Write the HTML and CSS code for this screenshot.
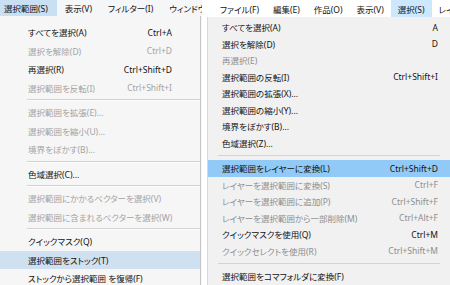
FILE: index.html
```html
<!DOCTYPE html>
<html lang="ja">
<head>
    <meta charset="UTF-8">
    <meta name="viewport" content="width=device-width, initial-scale=1.0">
    <title>選択範囲メニュー</title>
    <link rel="stylesheet" href="styles.css">
</head>
<body>
    <div class="panel panel-left">
        <div class="menubar">
            <span class="menu-title open">選択範囲(S)</span>
            <span class="menu-title">表示(V)</span>
            <span class="menu-title">フィルター(I)</span>
            <span class="menu-title">ウィンドウ(W)</span>
        </div>
        <div class="dropdown">
            <div class="item"><span>すべてを選択(A)</span><span class="key">Ctrl+A</span></div>
            <div class="item disabled"><span>選択を解除(D)</span><span class="key">Ctrl+D</span></div>
            <div class="item"><span>再選択(R)</span><span class="key">Ctrl+Shift+D</span></div>
            <div class="item disabled"><span>選択範囲を反転(I)</span><span class="key">Ctrl+Shift+I</span></div>
            <div class="sep"></div>
            <div class="item disabled"><span>選択範囲を拡張(E)...</span></div>
            <div class="item disabled"><span>選択範囲を縮小(U)...</span></div>
            <div class="item disabled"><span>境界をぼかす(B)...</span></div>
            <div class="sep"></div>
            <div class="item"><span>色域選択(C)...</span></div>
            <div class="sep"></div>
            <div class="item disabled"><span>選択範囲にかかるベクターを選択(V)</span></div>
            <div class="item disabled"><span>選択範囲に含まれるベクターを選択(W)</span></div>
            <div class="sep"></div>
            <div class="item"><span>クイックマスク(Q)</span></div>
            <div class="item active"><span>選択範囲をストック(T)</span></div>
            <div class="item"><span>ストックから選択範囲 を復帰(F)</span></div>
        </div>
    </div>

    <div class="gap"></div>

    <div class="panel panel-right">
        <div class="menubar">
            <span class="app-icon"></span>
            <span class="menu-title">ファイル(F)</span>
            <span class="menu-title">編集(E)</span>
            <span class="menu-title">作品(O)</span>
            <span class="menu-title">表示(V)</span>
            <span class="menu-title open">選択(S)</span>
            <span class="menu-title">レイヤー(L)</span>
        </div>
        <div class="dropdown">
            <div class="item"><span>すべてを選択(A)</span><span class="key">A</span></div>
            <div class="item"><span>選択を解除(D)</span><span class="key">D</span></div>
            <div class="item disabled"><span>再選択(E)</span></div>
            <div class="item"><span>選択範囲の反転(I)</span><span class="key">Ctrl+Shift+I</span></div>
            <div class="item"><span>選択範囲の拡張(X)...</span></div>
            <div class="item"><span>選択範囲の縮小(Y)...</span></div>
            <div class="item"><span>境界をぼかす(B)...</span></div>
            <div class="item"><span>色域選択(Z)...</span></div>
            <div class="sep"></div>
            <div class="item active"><span>選択範囲をレイヤーに変換(L)</span><span class="key">Ctrl+Shift+D</span></div>
            <div class="item disabled"><span>レイヤーを選択範囲に変換(S)</span><span class="key">Ctrl+F</span></div>
            <div class="item disabled"><span>レイヤーを選択範囲に追加(P)</span><span class="key">Ctrl+Shift+F</span></div>
            <div class="item disabled"><span>レイヤーを選択範囲から一部削除(M)</span><span class="key">Ctrl+Alt+F</span></div>
            <div class="item"><span>クイックマスクを使用(Q)</span><span class="key">Ctrl+M</span></div>
            <div class="item disabled"><span>クイックセレクトを使用(R)</span><span class="key">Ctrl+Shift+M</span></div>
            <div class="sep"></div>
            <div class="item"><span>選択範囲をコマフォルダに変換(F)</span></div>
        </div>
    </div>
</body>
</html>
```

FILE: styles.css
```css
body {
    margin: 0;
    width: 450px;
    height: 285px;
    overflow: hidden;
    display: flex;
    background-color: #ffffff;
    font-family: "Noto Sans", "Noto Sans CJK JP", sans-serif;
    font-size: 8.5px;
    font-feature-settings: "palt";
    color: #111111;
}
.panel {
    display: flex;
    flex-direction: column;
    overflow: hidden;
}
.gap {
    width: 5px;
    flex-shrink: 0;
    background-color: #ffffff;
}
.menubar {
    display: flex;
    align-items: center;
    white-space: nowrap;
    flex-shrink: 0;
    overflow: hidden;
}
.menu-title {
    display: flex;
    align-items: center;
    height: 100%;
    padding: 0 7px;
}
.dropdown {
    flex: 1;
}
.item {
    display: flex;
    justify-content: space-between;
    align-items: center;
    white-space: nowrap;
}
.item.disabled {
    color: #a3a3a3;
}
.sep {
    display: flex;
    align-items: center;
}
.sep::before {
    content: "";
    flex: 1;
}

/* left: older style menu */
.panel-left {
    width: 202px;
    flex-shrink: 0;
    background-color: #f4f6f8;
}
.panel-left .menubar {
    height: 16px;
}
.panel-left .menu-title {
    padding: 0 8px;
}
.panel-left .menu-title.open {
    padding: 0 9px 0 4px;
    background-color: #c9dff3;
}
.panel-left .dropdown {
    width: 200px;
    padding-top: 7px;
    background-color: #f6f6f6;
    border-right: 1px solid #c6c6c6;
}
.panel-left .item {
    height: 18.5px;
    padding: 0 28px 0 28px;
}
.panel-left .item.active {
    background-color: #cfe1f1;
}
.panel-left .sep {
    height: 6px;
    padding-left: 27px;
}
.panel-left .sep::before {
    border-top: 1px solid #d2d2d2;
    border-bottom: 1px solid #fcfcfc;
}

/* right: windows 10 style menu */
.panel-right {
    flex: 1;
    background-color: #ffffff;
}
.panel-right .menubar {
    height: 17px;
    padding-left: 2px;
}
.panel-right .menu-title {
    padding: 0 7px;
}
.panel-right .menu-title.open {
    background-color: #cce8ff;
}
.app-icon {
    width: 6px;
    height: 7px;
    margin-right: 4px;
    background: linear-gradient(#9a8f80, #6e655a);
}
.panel-right .dropdown {
    padding-top: 2px;
    background-color: #f1f1f1;
    border-left: 1px solid #d9d9d9;
}
.panel-right .item {
    height: 16.5px;
    padding: 0 12px 0 14px;
}
.panel-right .item.disabled {
    color: #8e8e8e;
}
.panel-right .item.active {
    background-color: #91c9f7;
}
.panel-right .sep {
    height: 9px;
    padding: 0 10px;
}
.panel-right .sep::before {
    border-top: 1px solid #d4d4d4;
}
```
